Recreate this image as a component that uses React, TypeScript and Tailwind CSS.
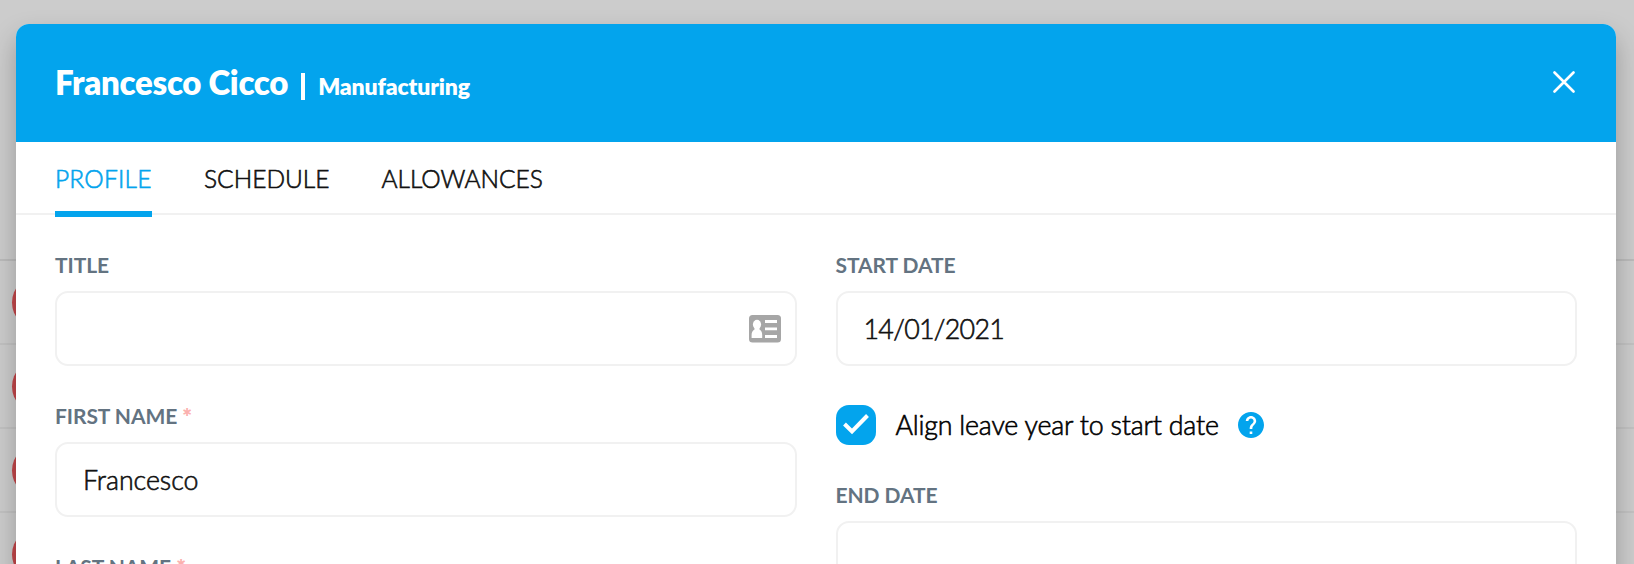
import React from "react";

const rows = [0, 1, 2, 3];

function Backdrop() {
  return (
    <div className="absolute inset-0 flex flex-col overflow-hidden bg-[#cccccc]">
      <div className="h-[259px] shrink-0" />
      {rows.map((r) => (
        <div key={r} className={`flex h-[84px] shrink-0 items-center border-t-2 pl-3 ${r === 0 ? "border-[#bbbbbb]" : "border-[#c2c2c2]"}`}>
          <span className="size-[53px] rounded-full bg-[#c3474a]" />
        </div>
      ))}
    </div>
  );
}

function Label({ children, required }: { children: React.ReactNode; required?: boolean }) {
  return (
    <div className="flex h-[26px] items-center text-[21px] leading-[26px] font-bold tracking-[-0.07px] text-[#637381]">
      <span>{children}</span>
      {required && <span className="ml-[5px] text-[23px] font-extrabold text-[#fbb0ae]">*</span>}
    </div>
  );
}

function Input({ value, numeric, children }: { value?: string; numeric?: boolean; children?: React.ReactNode }) {
  return (
    <div className="mt-[13px] flex h-[75px] items-center justify-between rounded-[13px] border-2 border-[#f1f1f1] pr-3.5 pl-[26px] text-[26.8px] font-light text-[#111111] [-webkit-text-stroke:0.6px_#111111]">
      <span className={numeric ? "pt-px tracking-[-0.7px]" : "pt-px tracking-[-0.05px]"}>{value}</span>
      {children}
    </div>
  );
}

function ContactCard() {
  return (
    <svg className="mt-px h-7 w-8" viewBox="0 0 32 28">
      <rect width="32" height="27.5" rx="3.5" fill="#a6a6a6" />
      <ellipse cx="8" cy="9.5" rx="4.1" ry="4.7" fill="#fff" />
      <path d="M5.500 12h5v2.500c2 1 2.700 3 2.700 5.500V23H2.600v-3c0-2.500.9-4.500 2.900-5.500z" fill="#fff" />
      <path d="M16 5h12v3H16zM16 12.500h12v2.700H16zM16 20h12v3H16z" fill="#fff" />
    </svg>
  );
}

export default function App() {
  return (
    <div className="relative h-[564px] w-[1634px] overflow-hidden font-['Lato',sans-serif]">
      <Backdrop />
      <div className="relative mt-6 mr-[18px] ml-4 h-[700px] rounded-[13px] bg-white shadow-[0_13px_26px_rgba(0,0,0,0.25)]">
        <header className="flex h-[118px] items-center justify-between rounded-t-[13px] bg-[#03a4ed] pr-[41px] pl-[39px] text-white">
          <div className="flex items-baseline font-extrabold">
            <span className="text-[33px] tracking-[-0.3px]">Francesco Cicco</span>
            <span className="mr-[13px] ml-[13px] h-[27px] w-1 translate-y-[5px] bg-white" />
            <span className="text-[23px] tracking-[-0.15px]">Manufacturing</span>
          </div>
          <svg className="mb-[2px] size-[22px]" viewBox="0 0 22 22" fill="none" stroke="currentColor" strokeWidth="2.6" strokeLinecap="round">
            <path d="M1.500 1.500l19 19M20.500 1.500l-19 19" />
          </svg>
        </header>
        <nav className="flex h-[73px] gap-[52px] border-b-2 border-[#f1f1f1] px-[39px] text-[24.5px] font-light text-[#111111] [-webkit-text-stroke:0.6px]">
          <div className="flex h-[75px] w-[97px] items-center border-b-[6px] border-[#03a4ed] pt-1.5 tracking-[0.2px] text-[#03a4ed]">PROFILE</div>
          <div className="flex h-[75px] items-center">SCHEDULE</div>
          <div className="flex h-[75px] items-center">ALLOWANCES</div>
        </nav>
        <main className="grid grid-cols-2 gap-x-[39px] px-[39px] pt-[37px]">
          <section className="flex flex-col gap-[37px]">
            <div>
              <Label>TITLE</Label>
              <Input><ContactCard /></Input>
            </div>
            <div>
              <Label required>FIRST NAME</Label>
              <Input value="Francesco" />
            </div>
            <div>
              <Label required>LAST NAME</Label>
              <Input />
            </div>
          </section>
          <section>
            <Label>START DATE</Label>
            <Input value="14/01/2021" numeric />
            <div className="mt-[39px] flex h-10 items-center">
              <span className="flex size-10 items-center justify-center rounded-[13px] bg-[#03a4ed]">
                <svg className="size-10" viewBox="0 0 40 40" fill="none" stroke="#fff" strokeWidth="4">
                  <path d="M8.500 19l7.500 7.500L31.500 10.500" />
                </svg>
              </span>
              <span className="ml-5 pt-px text-[26.8px] font-light tracking-[-0.2px] text-[#000000] [-webkit-text-stroke:0.6px]">Align leave year to start date</span>
              <svg className="ml-[19px] size-[26px]" viewBox="2 2 20 20">
                <path fill="#03a4ed" d="M12 2C6.480 2 2 6.480 2 12s4.480 10 10 10 10-4.480 10-10S17.520 2 12 2zm1 17h-2v-2h2v2zm2.070-7.750l-.9.920C13.450 12.900 13 13.500 13 15h-2v-.5c0-1.100.450-2.100 1.170-2.830l1.240-1.260c.370-.360.590-.860.590-1.410 0-1.100-.9-2-2-2s-2 .9-2 2H8c0-2.210 1.790-4 4-4s4 1.790 4 4c0 .880-.360 1.680-.930 2.250z" />
              </svg>
            </div>
            <div className="mt-[37px]">
              <Label>END DATE</Label>
              <Input />
            </div>
          </section>
        </main>
      </div>
    </div>
  );
}
